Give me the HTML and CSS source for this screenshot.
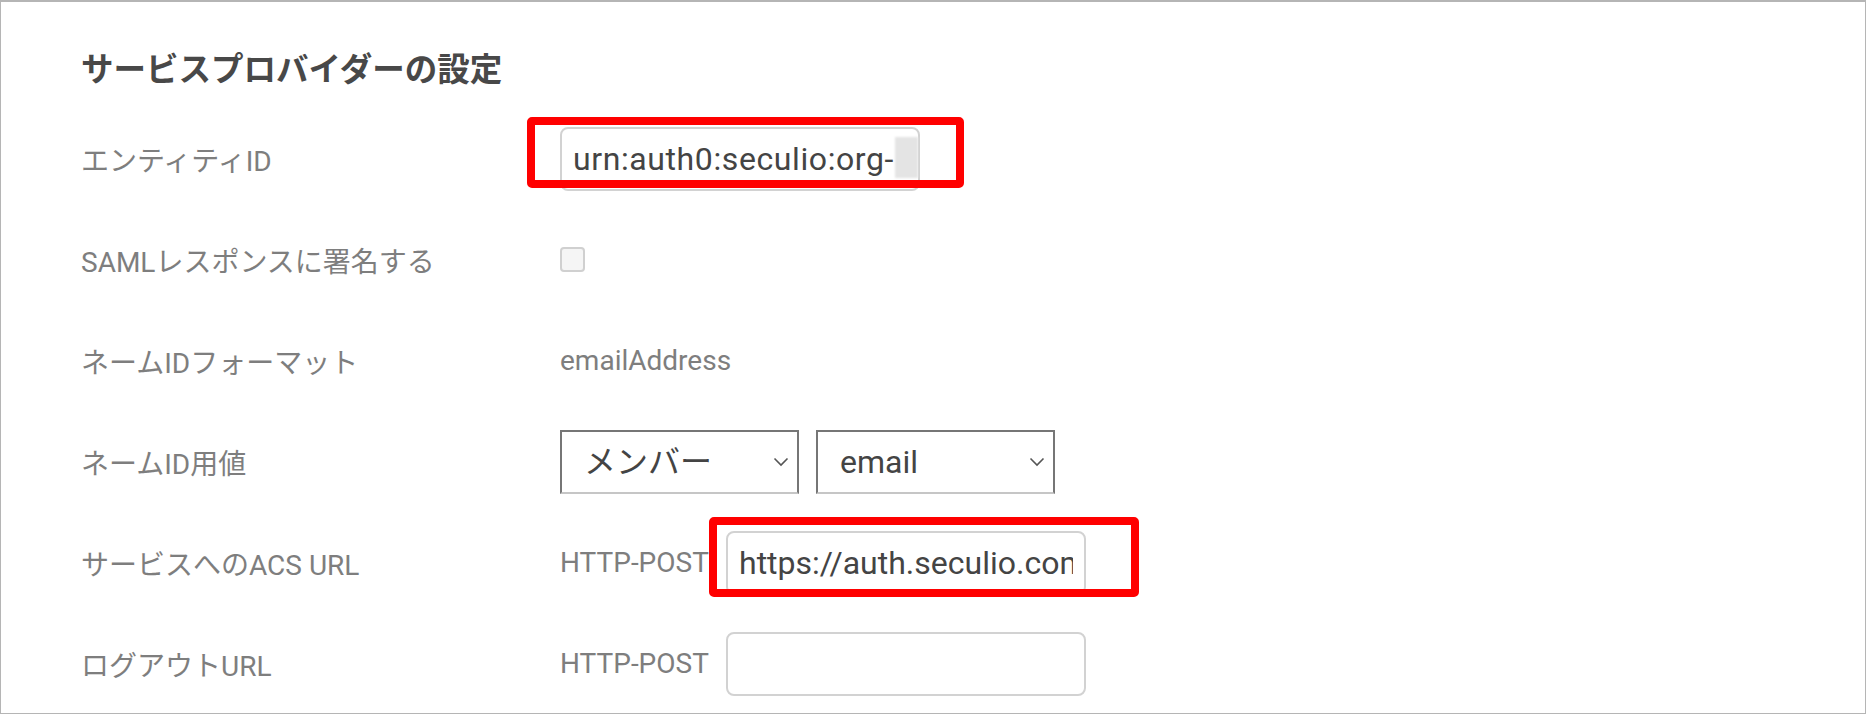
FILE: index.html
```html
<!DOCTYPE html>
<html lang="ja">
<head>
<meta charset="utf-8">
<title>サービスプロバイダーの設定</title>
<link rel="stylesheet" href="styles.css">
</head>
<body>
<div class="page">
  <h2 class="title">サービスプロバイダーの設定</h2>

  <div class="row">
    <div class="label">エンティティID</div>
    <div class="value">
      <div class="field-wrap">
        <input class="text-input entity-input" type="text" value="urn:auth0:seculio:org-" readonly>
        <span class="blur"></span>
        <span class="mark mark-entity"></span>
      </div>
    </div>
  </div>

  <div class="row">
    <div class="label">SAMLレスポンスに署名する</div>
    <div class="value">
      <input class="check" type="checkbox">
    </div>
  </div>

  <div class="row">
    <div class="label">ネームIDフォーマット</div>
    <div class="value plain">emailAddress</div>
  </div>

  <div class="row">
    <div class="label">ネームID用値</div>
    <div class="value selects">
      <div class="select-wrap">
        <select class="select">
          <option>メンバー</option>
        </select>
        <svg class="chev" width="16" height="10" viewBox="0 0 16 10"><path d="M1.5 1.5 L8 8 L14.5 1.5" fill="none" stroke="#555" stroke-width="1.6"/></svg>
      </div>
      <div class="select-wrap">
        <select class="select">
          <option>email</option>
        </select>
        <svg class="chev" width="16" height="10" viewBox="0 0 16 10"><path d="M1.5 1.5 L8 8 L14.5 1.5" fill="none" stroke="#555" stroke-width="1.6"/></svg>
      </div>
    </div>
  </div>

  <div class="row">
    <div class="label">サービスへのACS URL</div>
    <div class="value">
      <span class="binding">HTTP-POST</span>
      <div class="field-wrap">
        <input class="text-input" type="text" value="https://auth.seculio.com/login/callback" readonly>
        <span class="mark mark-acs"></span>
      </div>
    </div>
  </div>

  <div class="row">
    <div class="label">ログアウトURL</div>
    <div class="value">
      <span class="binding">HTTP-POST</span>
      <div class="field-wrap">
        <input class="text-input" type="text" value="" readonly>
      </div>
    </div>
  </div>
</div>
</body>
</html>
```

FILE: styles.css
```css
html, body {
  margin: 0;
  padding: 0;
  background: #ffffff;
}

body {
  font-family: Roboto, "Noto Sans CJK JP", sans-serif;
}

.page {
  box-sizing: border-box;
  width: 1866px;
  height: 714px;
  border: 1px solid #b5b5b5;
  border-top-width: 2px;
  padding: 48px 0 0 80px;
  overflow: hidden;
}

.title {
  margin: 0 0 18px;
  font-size: 32.5px;
  line-height: 40px;
  font-weight: 700;
  color: #484848;
}

.row {
  display: grid;
  grid-template-columns: 479px auto;
  align-items: center;
  height: 101px;
}

.label {
  font-size: 28px;
  color: #7e7e7e;
  white-space: nowrap;
}

.value {
  display: flex;
  align-items: center;
}

.plain {
  font-size: 28px;
  color: #7e7e7e;
}

.binding {
  width: 166px;
  font-size: 28px;
  color: #7e7e7e;
}

.field-wrap {
  position: relative;
  display: inline-block;
}

.text-input {
  display: block;
  box-sizing: border-box;
  width: 360px;
  height: 64px;
  margin: 0;
  padding: 0 11px;
  border: 2px solid #d2d2d2;
  border-radius: 8px;
  background: #ffffff;
  font-family: Roboto, "Noto Sans CJK JP", sans-serif;
  font-size: 32px;
  color: #444444;
  outline: none;
}

.entity-input {
  letter-spacing: 0.6px;
}

.blur {
  position: absolute;
  left: 335px;
  top: 10px;
  width: 23px;
  height: 41px;
  background: #e4e4e4;
  filter: blur(1px);
}

.mark {
  position: absolute;
  box-sizing: border-box;
  border: 8px solid #ff0000;
  border-radius: 5px;
  pointer-events: none;
}

.mark-entity {
  left: -33px;
  top: -10px;
  width: 437px;
  height: 71px;
}

.mark-acs {
  left: -17px;
  top: -14px;
  width: 430px;
  height: 80px;
}

.check {
  appearance: none;
  -webkit-appearance: none;
  box-sizing: border-box;
  width: 25px;
  height: 25px;
  margin: 0;
  border: 2px solid #d0d0d0;
  border-radius: 4px;
  background: #f5f5f5;
}

.selects {
  gap: 17px;
}

.select-wrap {
  position: relative;
}

.select {
  appearance: none;
  -webkit-appearance: none;
  display: block;
  box-sizing: border-box;
  width: 239px;
  height: 64px;
  margin: 0;
  padding: 0 0 0 22px;
  border: 2px solid #767676;
  border-bottom-color: #c6c6c6;
  border-radius: 0;
  background: #ffffff;
  font-family: Roboto, "Noto Sans CJK JP", sans-serif;
  font-size: 32px;
  color: #444444;
}

.chev {
  position: absolute;
  right: 10px;
  top: 27px;
  pointer-events: none;
}
```
